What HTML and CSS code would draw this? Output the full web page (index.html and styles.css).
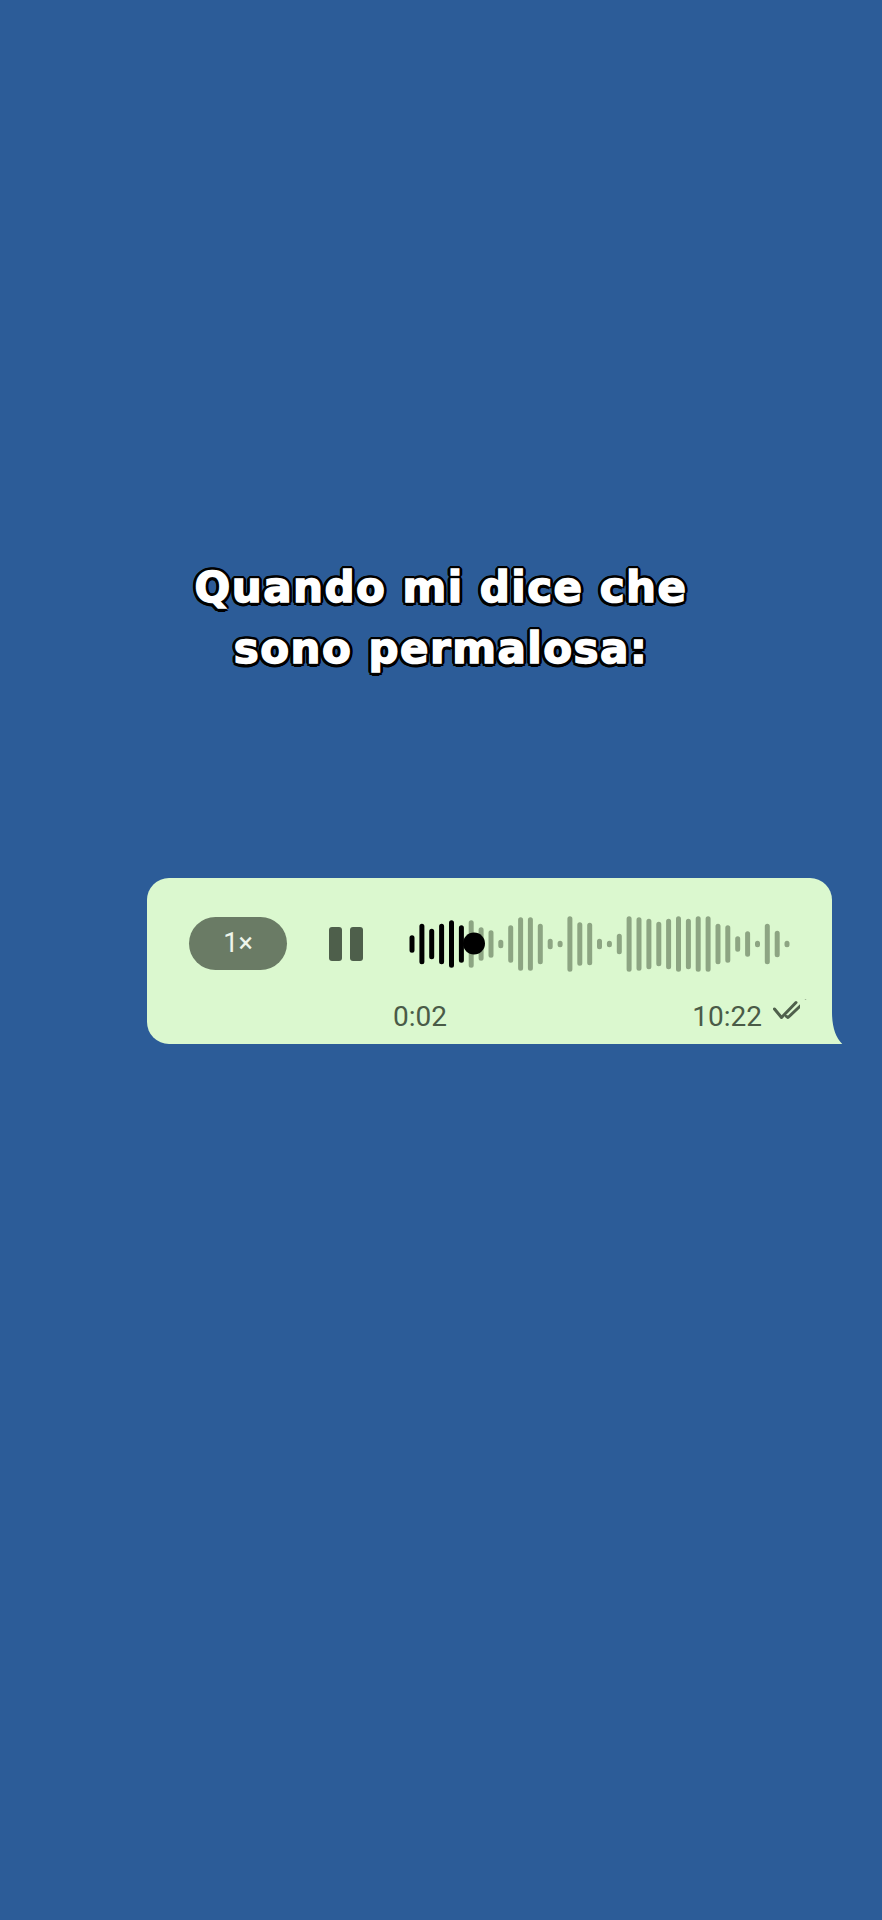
FILE: index.html
```html
<!DOCTYPE html>
<html lang="it">
<head>
  <meta charset="UTF-8" />
  <meta name="viewport" content="width=device-width, initial-scale=1.0"/>
  <title>Vocale</title>
  <link rel="stylesheet" href="styles.css">
</head>
<body>

  <h1 class="caption">Quando mi dice che<br>sono permalosa:</h1>

  <div class="bubble">
    <div class="player">
      <div class="speed">1×</div>
      <div class="pause"><span></span><span></span></div>
      <svg class="wave" width="400" height="60" viewBox="0 0 400 60">
        <path class="played" d="M12 23.75V36.25 M21.9 12.25V47.75 M31.7 17.25V42.75 M41.6 12.25V47.75 M51.5 8.75V51.25 M61.4 13.75V46.25"/>
        <path class="rest" d="M71.2 8.75V51.25 M81.1 15.75V44.25 M91 18.75V41.25 M100.8 28.25V31.75 M110.7 13.75V46.25 M120.6 5.75V54.25 M130.4 5.75V54.25 M140.3 12.25V47.75 M150.2 27.25V32.75 M160.1 29.25V30.75 M169.9 4.75V55.25 M179.8 10.75V49.25 M189.7 11.25V48.75 M199.5 27.25V32.75 M209.4 29.25V30.75 M219.3 22.25V37.75 M229.1 4.75V55.25 M239 5.75V54.25 M248.9 7.25V52.75 M258.8 10.25V49.75 M268.6 7.25V52.75 M278.5 4.75V55.25 M288.4 7.25V52.75 M298.2 4.75V55.25 M308.1 4.75V55.25 M318 12.25V47.75 M327.8 13.75V46.25 M337.7 24.75V35.25 M347.6 19.75V40.25 M357.5 29.25V30.75 M367.3 12.25V47.75 M377.2 19.25V40.75 M387 29.25V30.75"/>
        <circle cx="74" cy="29.5" r="11" fill="#000"/>
      </svg>
    </div>
    <div class="meta">
      <span class="duration">0:02</span>
      <span class="time">
        <span>10:22</span>
        <svg class="ticks" width="36" height="22" viewBox="0 0 36 22">
          <path d="M2.5 10 L9.5 18.5 L24 3.5 M14.5 17.5 L16 18.5 L33.5 2"/>
        </svg>
      </span>
    </div>
    <svg class="tail" width="48" height="50" viewBox="800 1000 48 50">
      <path d="M832 1000 L832 1012 C832 1030 837 1041 847 1048 C838 1050 828 1047 821 1042 C815 1044 810 1044 800 1044 L800 1000 Z"/>
    </svg>
  </div>

</body>
</html>
```

FILE: styles.css
```css
body {
  margin: 0;
  background-color: #2c5c98;
  font-family: Roboto, "Noto Sans", sans-serif;
}
.caption {
  margin: 557px 0 0;
  text-align: center;
  font-family: "DejaVu Sans", sans-serif;
  font-weight: 700;
  font-size: 42px;
  line-height: 61px;
  letter-spacing: 1.5px;
  color: #fff;
  -webkit-text-stroke: 1.5px #fff;
  text-shadow:
    3.5px 0 0 #000, -3.5px 0 0 #000, 0 3.5px 0 #000, 0 -3.5px 0 #000,
    2.5px 2.5px 0 #000, -2.5px 2.5px 0 #000, 2.5px -2.5px 0 #000, -2.5px -2.5px 0 #000,
    3.2px 1.4px 0 #000, -3.2px 1.4px 0 #000, 3.2px -1.4px 0 #000, -3.2px -1.4px 0 #000,
    1.4px 3.2px 0 #000, -1.4px 3.2px 0 #000, 1.4px -3.2px 0 #000, -1.4px -3.2px 0 #000;
}
.bubble {
  position: relative;
  margin: 199px 0 0 147px;
  width: 685px;
  box-sizing: border-box;
  padding: 39px 24px 11px 42px;
  background-color: #dbf8cf;
  border-radius: 22px 22px 0 22px;
}
.player {
  display: flex;
  align-items: center;
  height: 53px;
}
.speed {
  width: 98px;
  height: 53px;
  border-radius: 27px;
  background-color: #6a7b65;
  color: #eef5ea;
  font-size: 27px;
  line-height: 53px;
  text-align: center;
}
.pause {
  display: flex;
  gap: 8px;
  margin-left: 42px;
}
.pause span {
  width: 13px;
  height: 34px;
  border-radius: 3px;
  background-color: #4e5f4b;
}
.wave {
  margin-left: 37px;
  display: block;
}
.wave path {
  stroke-width: 5;
  stroke-linecap: round;
  fill: none;
}
.wave .played {
  stroke: #000;
}
.wave .rest {
  stroke: #8da583;
}
.meta {
  display: flex;
  justify-content: space-between;
  align-items: center;
  margin-top: 31px;
  font-size: 28px;
  line-height: 32px;
  color: #4a5b47;
}
.duration {
  margin-left: 204px;
}
.time {
  display: flex;
  align-items: flex-start;
  gap: 10px;
}
.ticks {
  display: block;
  flex-shrink: 0;
  overflow: visible;
  margin-top: -2px;
}
.ticks path {
  fill: none;
  stroke: #4f604c;
  stroke-width: 3;
  stroke-linecap: round;
  stroke-linejoin: round;
}
.tail {
  position: absolute;
  right: -16px;
  bottom: -6px;
}
.tail path {
  fill: #dbf8cf;
}
```
